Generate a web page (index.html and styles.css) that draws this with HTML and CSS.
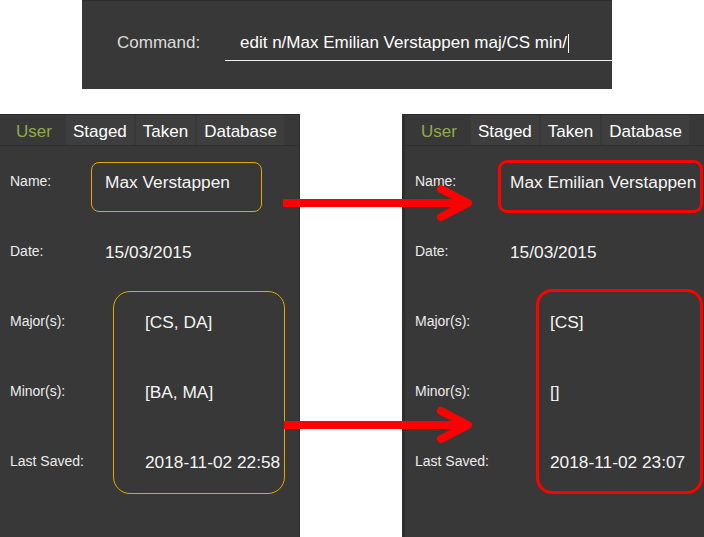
FILE: index.html
```html
<!DOCTYPE html>
<html>
<head>
<meta charset="utf-8">
<link rel="stylesheet" href="styles.css">
</head>
<body>
<div class="page">
  <div class="cmdbar">
    <div class="cmd-row">
      <span class="cmd-label">Command:</span>
      <div class="cmd-input">edit n/Max Emilian Verstappen maj/CS min/<span class="caret"></span></div>
    </div>
  </div>

  <div class="panels">
    <section class="panel panel-left">
      <nav class="tabs">
        <span class="tab active">User</span>
        <span class="tab">Staged</span>
        <span class="tab">Taken</span>
        <span class="tab">Database</span>
      </nav>
      <div class="fields">
        <span class="label">Name:</span><span class="value">Max Verstappen</span>
        <span class="label">Date:</span><span class="value">15/03/2015</span>
        <span class="label">Major(s):</span><span class="value indent">[CS, DA]</span>
        <span class="label">Minor(s):</span><span class="value indent">[BA, MA]</span>
        <span class="label">Last Saved:</span><span class="value indent">2018-11-02 22:58</span>
      </div>
      <div class="mark mark-old name-old"></div>
      <div class="mark mark-old group-old"></div>
    </section>

    <section class="panel panel-right">
      <nav class="tabs">
        <span class="tab active">User</span>
        <span class="tab">Staged</span>
        <span class="tab">Taken</span>
        <span class="tab">Database</span>
      </nav>
      <div class="fields">
        <span class="label">Name:</span><span class="value">Max Emilian Verstappen</span>
        <span class="label">Date:</span><span class="value">15/03/2015</span>
        <span class="label">Major(s):</span><span class="value indent">[CS]</span>
        <span class="label">Minor(s):</span><span class="value indent">[]</span>
        <span class="label">Last Saved:</span><span class="value indent">2018-11-02 23:07</span>
      </div>
      <div class="mark mark-new name-new"></div>
      <div class="mark mark-new group-new"></div>
    </section>
  </div>

  <svg class="arrows" width="704" height="537" viewBox="0 0 704 537">
    <g fill="none" stroke="#ff0000" stroke-width="8" stroke-linecap="round" stroke-linejoin="round">
      <line x1="283" y1="203" x2="466" y2="203" stroke-linecap="butt"/>
      <polyline points="441,189 468,203 441,217"/>
      <line x1="284" y1="425" x2="466" y2="425" stroke-linecap="butt"/>
      <polyline points="441,411 468,425 441,439"/>
    </g>
  </svg>
</div>
</body>
</html>
```

FILE: styles.css
```css
* { box-sizing: border-box; }

html, body {
  margin: 0;
  padding: 0;
  background: #ffffff;
}

body {
  font-family: "Liberation Sans", Arial, sans-serif;
  width: 704px;
  height: 537px;
  overflow: hidden;
}

.page {
  position: relative;
  width: 704px;
  height: 537px;
  display: flex;
  flex-direction: column;
  gap: 25px;
}

/* ---------- command bar ---------- */
.cmdbar {
  margin-left: 82px;
  width: 530px;
  height: 89px;
  background: #383838;
  border-top: 1px solid #2c2c2c;
  padding-top: 27px;
}

.cmd-row {
  display: flex;
  align-items: flex-start;
  padding-left: 35px;
}

.cmd-label {
  width: 108px;
  font-size: 17px;
  line-height: 30px;
  color: #dcdcdc;
}

.cmd-input {
  flex: 1;
  font-size: 17px;
  line-height: 30px;
  color: #ffffff;
  padding-left: 15px;
  padding-bottom: 2px;
  border-bottom: 1px solid #f0f0f0;
  white-space: nowrap;
  display: flex;
  align-items: center;
}

.caret {
  display: inline-block;
  width: 1px;
  height: 19px;
  background: #ffffff;
  margin-left: 1px;
}

/* ---------- panels ---------- */
.panels {
  flex: 1;
  display: flex;
  justify-content: space-between;
}

.panel {
  position: relative;
  background: #383838;
  border-top: 1px solid #2a2a2a;
  display: flex;
  flex-direction: column;
}

.panel-left {
  width: 300px;
  border-right: 1px solid #2e2e2e;
}

.panel-right {
  width: 302px;
  border-left: 3px solid #2e2e2e;
}

.tabs {
  display: flex;
  gap: 2px;
  height: 31px;
  padding-left: 4px;
  border-bottom: 1px solid #2f2f2f;
}

.tab {
  padding: 3px 7px 0;
  font-size: 17px;
  line-height: 27px;
  color: #ffffff;
  background: #3e3e3e;
  white-space: nowrap;
}

.tab.active {
  padding: 3px 12px 0;
  color: #8fad45;
  background: #383838;
}

.fields {
  display: grid;
  grid-template-columns: 95px 1fr;
  grid-auto-rows: 70px;
  align-items: center;
  padding-left: 10px;
}

.label {
  font-size: 14px;
  color: #ececec;
}

.value {
  font-size: 17.3px;
  padding-top: 3px;
  color: #f4f4f4;
  white-space: nowrap;
}

.value.indent {
  padding-left: 40px;
}

/* ---------- annotation marks ---------- */
.mark {
  position: absolute;
  pointer-events: none;
}

.mark-old {
  border: 1.5px solid #e3a800;
}

.mark-new {
  border: 3px solid #ff0000;
}

.name-old {
  left: 91px;
  top: 47px;
  width: 171px;
  height: 50px;
  border-radius: 8px;
}

.group-old {
  left: 113px;
  top: 176px;
  width: 172px;
  height: 203px;
  border-radius: 17px;
}

.name-new {
  left: 93px;
  top: 45px;
  width: 205px;
  height: 53px;
  border-radius: 9px;
}

.group-new {
  left: 131px;
  top: 174px;
  width: 167px;
  height: 205px;
  border-radius: 16px;
}

.arrows {
  position: absolute;
  left: 0;
  top: 0;
  pointer-events: none;
}
```
